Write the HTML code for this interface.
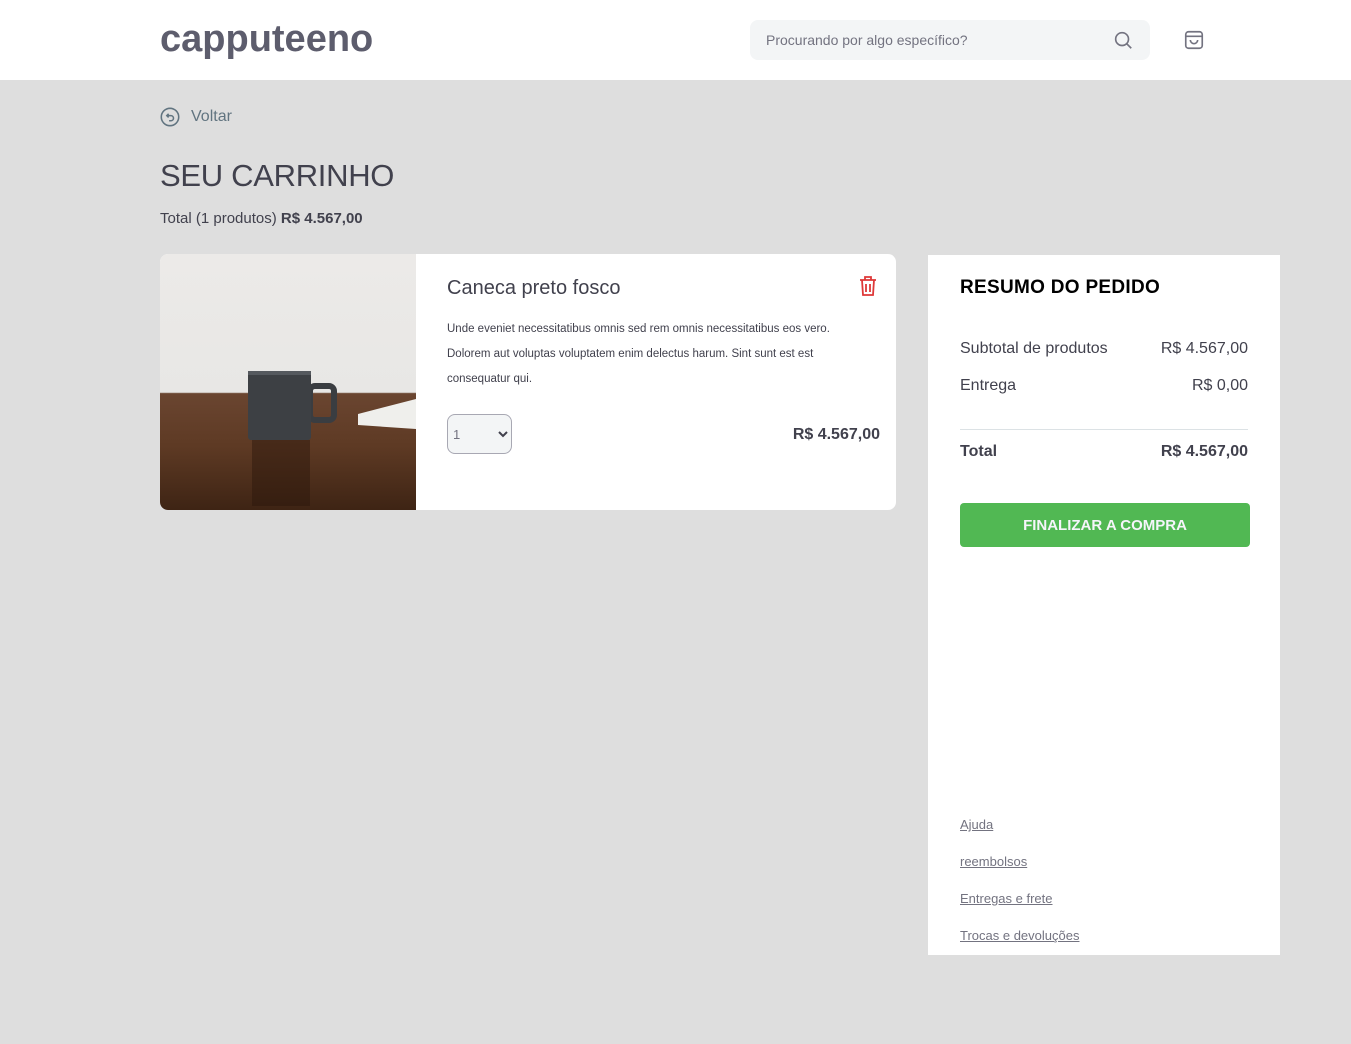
<!DOCTYPE html>
<html><head><meta charset="utf-8"><style>
*{box-sizing:border-box;margin:0;padding:0}
body{width:1351px;height:1044px;background:#dedede;font-family:"Liberation Sans",sans-serif;color:#41414d;position:relative;overflow:hidden}
header{position:absolute;left:0;top:0;width:1351px;height:80px;background:#fff}
.logo{position:absolute;left:160px;top:18px;font-size:38px;font-weight:bold;color:#5d5d6d;letter-spacing:0}
.search{position:absolute;left:750px;top:20px;width:400px;height:40px;background:#f3f5f6;border-radius:8px;font-size:14px;color:#737380;padding:12px 16px}
.abs{position:absolute}
.card{position:absolute;left:160px;top:254px;width:736px;height:256px;background:#fff;border-radius:8px;overflow:hidden}
.img{position:absolute;left:0;top:0;width:256px;height:256px;background:linear-gradient(#eceae8,#e8e7e5 54%,#6a4530 54.5%,#5e3a24 75%,#3e2414);}
.side{position:absolute;left:928px;top:255px;width:352px;height:700px;background:#fff}
.row{position:absolute;left:32px;width:288px;font-size:16px;color:#41414d;display:flex;justify-content:space-between}
.link{position:absolute;left:32px;font-size:13px;color:#737380;text-decoration:underline}
</style></head><body>
<header>
<div class="logo">capputeeno</div>
<div class="search">Procurando por algo específico?
<svg class="abs" style="left:362px;top:9px" width="22" height="22" viewBox="0 0 24 24" fill="none" stroke="#737380" stroke-width="1.8"><circle cx="11" cy="11" r="7"/><path d="M16 16l5 5"/></svg></div>
<svg class="abs" style="left:1183px;top:29px" width="22" height="22" viewBox="0 0 24 24" fill="none" stroke="#737380" stroke-width="1.8"><rect x="3" y="3" width="18" height="18" rx="3"/><path d="M3 8h18M8 12a4 4 0 0 0 8 0"/></svg>
</header>
<svg class="abs" style="left:159px;top:106px" width="22" height="22" viewBox="0 0 24 24" fill="none" stroke="#617480" stroke-width="1.7"><circle cx="12" cy="12" r="9.5"/><path d="M9 10.5h4a2.8 2.8 0 0 1 0 5.6h-2M10.5 8.5l-2 2 2 2"/></svg>
<div class="abs" style="left:191px;top:108px;font-size:16px;color:#617480">Voltar</div>
<div class="abs" style="left:160px;top:158px;font-size:31px;color:#41414d;letter-spacing:-0.3px">SEU CARRINHO</div>
<div class="abs" style="left:160px;top:210px;font-size:15px;color:#41414d">Total (1 produtos) <b>R$ 4.567,00</b></div>
<div class="card">
<div class="img">
<svg class="abs" style="left:0;top:0" width="256" height="256" viewBox="0 0 256 256">
<path d="M198 160l58-15v30l-58-4z" fill="#efefec"/>
<rect x="150" y="132" width="24" height="34" rx="5" fill="none" stroke="#3a3d41" stroke-width="6"/>
<rect x="88" y="117" width="63" height="69" rx="3" fill="#3d4044"/>
<rect x="88" y="117" width="63" height="4" fill="#55595e"/>
<rect x="92" y="186" width="58" height="66" fill="#2a160c" opacity=".45"/>
</svg></div>
<div class="abs" style="left:287px;top:23px;font-size:20px;color:#41414d">Caneca preto fosco</div>
<svg class="abs" style="left:698px;top:21px" width="20" height="22" viewBox="0 0 20 22" fill="none" stroke="#de3838" stroke-width="1.8"><path d="M2 5h16M7 5V2h6v3M4 5l1 15h10l1-15M8 9v8M12 9v8"/></svg>
<div class="abs" style="left:287px;top:63px;width:412px;font-size:11.5px;line-height:25px;color:#41414d">Unde eveniet necessitatibus omnis sed rem omnis necessitatibus eos vero. Dolorem aut voluptas voluptatem enim delectus harum. Sint sunt est est consequatur qui.</div>
<div class="abs" style="left:287px;top:160px;width:65px;height:40px;border:1px solid #a8a8b3;border-radius:8px;background:#f3f5f6;font-size:13px;color:#737380;padding:12px 5px">1
<svg class="abs" style="left:50px;top:16px" width="10" height="7" viewBox="0 0 10 7" fill="none" stroke="#41414d" stroke-width="2"><path d="M1 1l4 4 4-4"/></svg></div>
<div class="abs" style="right:16px;top:172px;font-size:16px;font-weight:bold;color:#41414d">R$ 4.567,00</div>
</div>
<div class="side">
<div class="abs" style="left:32px;top:22px;font-size:19px;font-weight:bold;color:#000;letter-spacing:0.3px">RESUMO DO PEDIDO</div>
<div class="row" style="top:85px"><span>Subtotal de produtos</span><span>R$ 4.567,00</span></div>
<div class="row" style="top:122px"><span>Entrega</span><span>R$ 0,00</span></div>
<div class="abs" style="left:32px;top:174px;width:288px;border-top:1px solid #dce2e5"></div>
<div class="row" style="top:188px;font-weight:bold"><span>Total</span><span>R$ 4.567,00</span></div>
<div class="abs" style="left:32px;top:248px;width:290px;height:44px;background:#51b853;border-radius:4px;color:#f5f5fa;font-size:15px;font-weight:bold;text-align:center;line-height:45px">FINALIZAR A COMPRA</div>
<div class="link" style="top:562px">Ajuda</div>
<div class="link" style="top:599px">reembolsos</div>
<div class="link" style="top:636px">Entregas e frete</div>
<div class="link" style="top:673px">Trocas e devoluções</div>
</div>
</body></html>
